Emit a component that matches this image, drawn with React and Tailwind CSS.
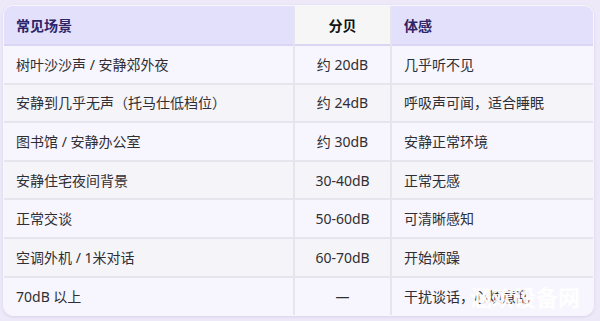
import React from "react";

const rows = [
  ["树叶沙沙声 / 安静郊外夜", "约 20dB", "几乎听不见"],
  ["安静到几乎无声（托马仕低档位）", "约 24dB", "呼吸声可闻，适合睡眠"],
  ["图书馆 / 安静办公室", "约 30dB", "安静正常环境"],
  ["安静住宅夜间背景", "30-40dB", "正常无感"],
  ["正常交谈", "50-60dB", "可清晰感知"],
  ["空调外机 / 1米对话", "60-70dB", "开始烦躁"],
  ["70dB 以上", "—", "干扰谈话，心烦意乱"],
];

export default function App() {
  return (
    <div
      className="relative w-[600px] h-[321px] bg-[#ede9f8] pt-[5px] pl-[3px] overflow-hidden"
      style={{ fontFamily: '"Noto Sans", "Noto Sans CJK SC", sans-serif' }}
    >
      <div className="w-[591px] rounded-[10px] overflow-hidden border border-[#f8f6fd] shadow-[0_1px_3px_rgba(120,100,180,0.18)]">
        <table className="w-full border-collapse table-fixed text-[14px] text-[#2f2f33]">
          <colgroup>
            <col className="w-[290px]" />
            <col className="w-[97px]" />
            <col className="w-[204px]" />
          </colgroup>
          <thead>
            <tr className="h-[39px] border-b-2 border-[#d9d5f2]">
              <th className="bg-[#e3e0fb] text-left pl-[12px] font-bold text-[#2e2468] border-r-2 border-[#e6e4ec]">常见场景</th>
              <th className="bg-[#f6f6f7] text-center font-bold text-[#111] border-r-2 border-[#e6e4ec]">分贝</th>
              <th className="bg-[#e3e0fb] text-left pl-[12px] font-bold text-[#2e2468]">体感</th>
            </tr>
          </thead>
          <tbody>
            {rows.map((r, i) => (
              <tr
                key={i}
                className={`h-[38.6px] ${i % 2 === 0 ? "bg-[#f7f5fd]" : "bg-[#f5f4f9]"} ${i < rows.length - 1 ? "border-b-2 border-[#e6e4ec]" : ""}`}
              >
                <td className="pl-[12px] border-r-2 border-[#e6e4ec]">{r[0]}</td>
                <td className="text-center border-r-2 border-[#e6e4ec]">{r[1]}</td>
                <td className="pl-[12px]">{r[2]}</td>
              </tr>
            ))}
          </tbody>
        </table>
      </div>
      <div className="absolute left-[470px] top-[283px] text-[22px] leading-[28px] font-bold text-white/90 pointer-events-none">
        涵欢设备网
      </div>
    </div>
  );
}
